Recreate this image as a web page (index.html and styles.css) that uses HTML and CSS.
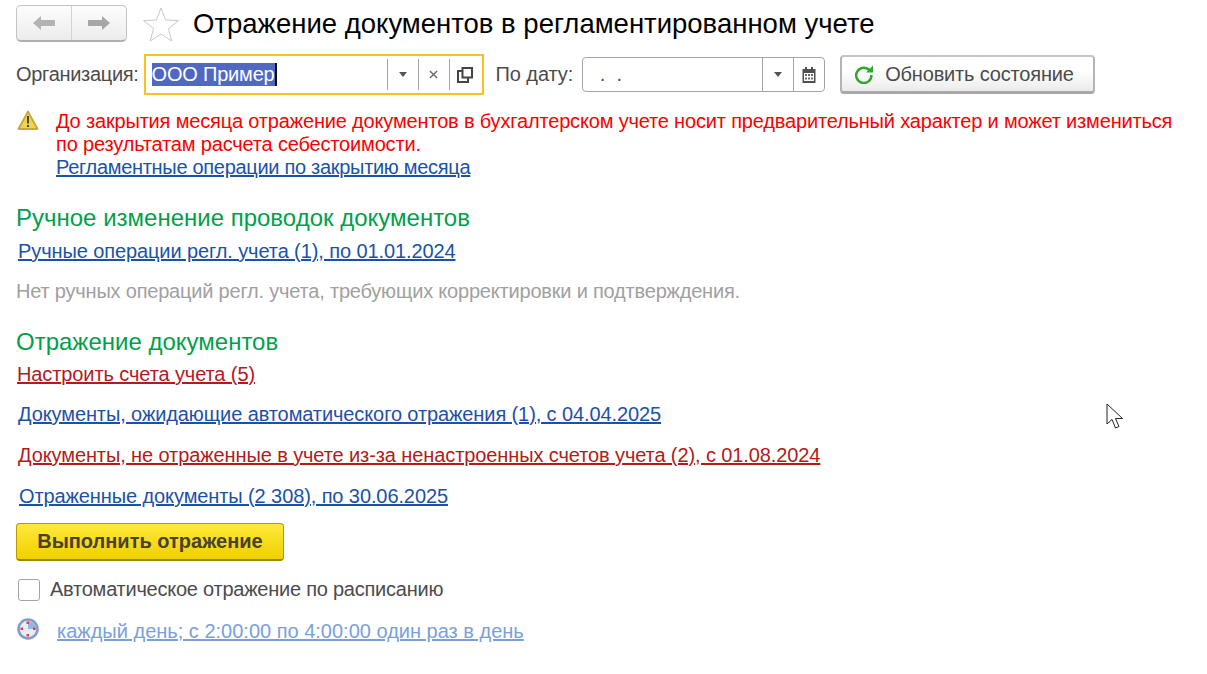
FILE: index.html
```html
<!DOCTYPE html>
<html lang="ru">
<head>
  <meta charset="UTF-8"/>
  <title>Отражение документов в регламентированном учете</title>
  <link rel="stylesheet" href="styles.css">
</head>
<body>

  <header class="title-row">
    <div class="nav-btns">
      <button class="nav-btn">
        <svg width="24" height="18" viewBox="0 0 24 18"><path d="M1 9 L9 2 V6 H23 V12 H9 V16 Z" fill="#b3b3b3"/></svg>
      </button>
      <button class="nav-btn">
        <svg width="24" height="18" viewBox="0 0 24 18"><path d="M23 9 L15 2 V6 H1 V12 H15 V16 Z" fill="#a6a6a6"/></svg>
      </button>
    </div>
    <svg class="star" width="38" height="36" viewBox="0 0 38 36"><path d="M19 2 L23.6 14 L36.5 14.6 L26.4 22.6 L29.8 35 L19 28 L8.2 35 L11.6 22.6 L1.5 14.6 L14.4 14 Z" fill="#fff" stroke="#c8c8c8"/></svg>
    <h1>Отражение документов в регламентированном учете</h1>
  </header>

  <div class="filter-row">
    <span class="label">Организация:</span>
    <div class="field field-org">
      <div class="field-value"><span class="selected">ООО Пример</span><span class="caret"></span></div>
      <div class="field-btn"><svg width="8" height="5" viewBox="0 0 8 5"><path d="M0 0 H8 L4 5 Z" fill="#555"/></svg></div>
      <div class="field-btn"><svg width="9" height="9" viewBox="0 0 10 10"><path d="M1 1 L9 9 M9 1 L1 9" stroke="#666" stroke-width="1.5"/></svg></div>
      <div class="field-btn"><svg width="16" height="16" viewBox="0 0 16 16"><path d="M5.5 1 H15 V10.5 H5.5 Z M5.5 4 H1 V15 H11 V10.5" fill="none" stroke="#444" stroke-width="2"/></svg></div>
    </div>
    <span class="label label-date">По дату:</span>
    <div class="field field-date">
      <div class="field-value date-value">&nbsp;.&nbsp;&nbsp;.</div>
      <div class="field-btn"><svg width="8" height="5" viewBox="0 0 8 5"><path d="M0 0 H8 L4 5 Z" fill="#555"/></svg></div>
      <div class="field-btn">
        <svg width="14" height="16" viewBox="0 0 14 16"><path d="M0.500 2 H3 V0 H5 V2 H9 V0 H11 V2 H13.500 V16 H0.500 Z" fill="#4f4f4f"/><path d="M2 6 H12 V14 H2 Z" fill="#fff"/><path d="M3 7 H5 V9 H3 Z M6 7 H8 V9 H6 Z M9 7 H11 V9 H9 Z M3 10.500 H5 V12.500 H3 Z M6 10.500 H8 V12.500 H6 Z M9 10.500 H11 V12.500 H9 Z" fill="#6a6a6a"/></svg>
      </div>
    </div>
    <button class="btn-refresh">
      <svg width="20" height="19" viewBox="0 0 20 19"><path d="M16 6 A7.600 7.600 0 1 0 17.400 10" fill="none" stroke="#2ea82e" stroke-width="2.500"/><path d="M12 7.500 H19 V0.500 Z" fill="#2ea82e"/></svg>
      Обновить состояние
    </button>
  </div>

  <div class="warning">
    <svg class="warning-icon" width="22" height="22" viewBox="0 0 22 22"><path d="M11 1.500 L20.500 19 H1.500 Z" fill="#f5d24b" stroke="#c9a83a" stroke-width="1.800" stroke-linejoin="round"/><path d="M10 6 H12 V13.500 H10 Z M10 15 H12 V17 H10 Z" fill="#444"/></svg>
    <div class="warning-text">
      <p>До закрытия месяца отражение документов в бухгалтерском учете носит предварительный характер и может измениться<br>по результатам расчета себестоимости.</p>
      <a class="link link-narrow" href="#">Регламентные операции по закрытию месяца</a>
    </div>
  </div>

  <h2 class="first">Ручное изменение проводок документов</h2>
  <div class="row row-first"><a class="link" href="#">Ручные операции регл. учета (1), по 01.01.2024</a></div>
  <div class="row note">Нет ручных операций регл. учета, требующих корректировки и подтверждения.</div>

  <h2>Отражение документов</h2>
  <div class="row row-tight"><a class="link red" href="#">Настроить счета учета (5)</a></div>
  <div class="row"><a class="link" href="#">Документы, ожидающие автоматического отражения (1), с 04.04.2025</a></div>
  <div class="row"><a class="link red" href="#">Документы, не отраженные в учете из-за ненастроенных счетов учета (2), с 01.08.2024</a></div>
  <div class="row row-last"><a class="link" href="#">Отраженные документы (2 308), по 30.06.2025</a></div>

  <button class="btn-main">Выполнить отражение</button>

  <label class="check-row">
    <span class="check"></span>
    Автоматическое отражение по расписанию
  </label>

  <div class="schedule">
    <svg class="clock" width="22" height="22" viewBox="0 0 22 22"><circle cx="11" cy="11" r="9.500" fill="#e6edf8" stroke="#7f9ccb" stroke-width="2.500"/><path d="M11 11 V3 A8 8 0 0 1 19 11 Z" fill="#9db4dc"/><path d="M9.500 3.500 H12 V6 H9.500 Z M3.500 9.500 H6 V12 H3.500 Z M16 9.500 H18.500 V12 H16 Z M9.500 16 H12 V18.500 H9.500 Z" fill="#ee3b33"/></svg>
    <a class="link pale" href="#">каждый день; с 2:00:00 по 4:00:00 один раз в день</a>
  </div>

  <svg class="cursor" width="20" height="28" viewBox="0 0 20 28"><path d="M1 1 V21 L6 16.500 L9.500 25 L13 23.500 L9.500 15.500 H16.500 Z" fill="#fff" stroke="#222" stroke-width="1"/></svg>

</body>
</html>
```

FILE: styles.css
```css
* {
  margin: 0;
  padding: 0;
  box-sizing: border-box;
  font-family: "Liberation Sans", Arial, sans-serif;
}

body {
  background: #fff;
  color: #4b4b4b;
  font-size: 20px;
  line-height: 23px;
  padding: 5px 16px 0;
  position: relative;
  height: 674px;
  overflow: hidden;
}

/* Title row */
.title-row {
  display: flex;
  align-items: center;
  height: 37px;
}

.nav-btns {
  display: flex;
  width: 111px;
  height: 37px;
  border: 1px solid #c4c4c4;
  border-bottom: 2px solid #b0b0b0;
  border-radius: 5px;
  background: linear-gradient(to bottom, #fdfdfd, #ececec);
}

.nav-btn {
  flex: 1;
  border: none;
  background: transparent;
  display: flex;
  align-items: center;
  justify-content: center;
}

.nav-btn + .nav-btn {
  border-left: 1px solid #d2d2d2;
}

.star {
  margin: 0 13px 0 15px;
}

h1 {
  font-size: 27.5px;
  font-weight: normal;
  color: #000;
}

/* Organization and date */
.filter-row {
  display: flex;
  align-items: center;
  height: 41px;
  margin-top: 12px;
}

.label {
  margin-right: 5px;
  letter-spacing: -0.3px;
}

.label-date {
  margin-left: 12px;
  margin-right: 9px;
  letter-spacing: -0.1px;
}

.field {
  display: flex;
  background: #fff;
  border: 1px solid #a5a5a5;
  border-radius: 4px;
  height: 35px;
}

.field-org {
  width: 340px;
  height: 41px;
  border: 2px solid #f6c51b;
  border-radius: 0;
  padding: 3px 2px 3px 0;
}

.field-org .field-value {
  padding-left: 6px;
}

.field-date {
  width: 243px;
}

.field-value {
  flex: 1;
  padding-left: 5px;
  display: flex;
  align-items: center;
}

.selected {
  background: #5068c2;
  color: #fff;
  letter-spacing: -0.2px;
}

.caret {
  width: 2px;
  height: 23px;
  background: #111;
}

.date-value {
  color: #33507a;
  padding-left: 11px;
  white-space: pre;
}

.field-btn {
  width: 31px;
  display: flex;
  align-items: center;
  justify-content: center;
  border-left: 1px solid #a5a5a5;
}

.btn-refresh {
  display: flex;
  align-items: center;
  gap: 11px;
  margin-left: 15px;
  width: 255px;
  height: 39px;
  padding-left: 12px;
  font-size: 20px;
  letter-spacing: -0.17px;
  color: #4b4b4b;
  background: linear-gradient(to bottom, #fff 40%, #ebebeb);
  border: 2px solid #b4b4b4;
  border-top-color: #c4c4c4;
  border-bottom: 3px solid #a8a8a8;
  border-radius: 4px;
}

/* Warning */
.warning {
  display: flex;
  margin-top: 3px;
  padding-top: 12px;
}

.warning-icon {
  margin: 0 17px 0 1px;
  flex: none;
}

.warning-text {
  color: #fb0000;
  white-space: nowrap;
  letter-spacing: -0.17px;
}

a {
  text-decoration: underline;
}

.link {
  color: #1b52a8;
  letter-spacing: -0.1px;
}

.link-narrow {
  letter-spacing: -0.3px;
}

.link.red {
  color: #b31b1b;
}

.link.pale {
  color: #7ba0d8;
  letter-spacing: 0;
}

/* Sections */
h2 {
  font-size: 24px;
  font-weight: normal;
  line-height: 26px;
  color: #00a04a;
  margin-top: 26px;
  margin-bottom: 8px;
}

.row {
  line-height: 23px;
  padding-left: 2px;
  margin-bottom: 18px;
}

.row-first {
  margin-top: 9px;
  margin-bottom: 17px;
}

.row-tight {
  padding-left: 1px;
  margin-bottom: 17px;
}

.row-last {
  padding-left: 3px;
  margin-bottom: 15px;
}

.note {
  color: #a0a0a0;
  padding-left: 0;
  margin-bottom: 0;
  letter-spacing: -0.2px;
}

.btn-main {
  display: block;
  width: 268px;
  height: 38px;
  font-size: 20px;
  font-weight: bold;
  color: #484230;
  background: linear-gradient(to bottom, #ffe93a, #f0d000);
  border: 1px solid #b39b00;
  border-bottom: 2px solid #9c8700;
  border-radius: 4px;
}

.check-row {
  display: flex;
  align-items: center;
  margin-top: 17px;
  padding-left: 2px;
  gap: 10px;
  letter-spacing: -0.24px;
}

.check {
  width: 22px;
  height: 22px;
  border: 1px solid #a5a5a5;
  border-radius: 3px;
  background: #fff;
}

.schedule {
  display: flex;
  align-items: center;
  gap: 18px;
  margin-top: 17px;
  padding-left: 1px;
}

.clock {
  margin-bottom: 4px;
}

.cursor {
  position: absolute;
  left: 1106px;
  top: 403px;
}
```
